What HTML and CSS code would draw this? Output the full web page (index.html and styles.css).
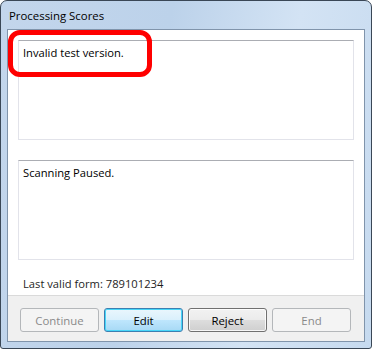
FILE: index.html
```html
<!DOCTYPE html>
<html>

<head>
    <meta name="viewport" content="width=device-width, initial-scale=1">
    <title>Processing Scores</title>

    <link rel="stylesheet" href="styles.css">

</head>

<body>
    <div class="window">
        <div class="titlebar">Processing Scores</div>

        <div class="client">
            <div class="content">
                <div class="textbox">Invalid test version.</div>
                <div class="textbox second">Scanning Paused.</div>
                <div class="status">Last valid form: 789101234</div>
            </div>

            <div class="footer">
                <button class="btn" disabled>Continue</button>
                <button class="btn default">Edit</button>
                <button class="btn">Reject</button>
                <button class="btn" disabled>End</button>
            </div>
        </div>

        <!-- annotation round the first message -->
        <div class="highlight"></div>
    </div>
</body>

</html>
```

FILE: styles.css
```css
body {
    margin: 0;
    font-family: "Open Sans", "Noto Sans", sans-serif;
    font-size: 11.2px;
    color: #000;
}

.window {
    position: relative;
    width: 372px;
    height: 349px;
    box-sizing: border-box;
    border: 1px solid #3a4756;
    border-radius: 7px 7px 3px 3px;
    background: linear-gradient(100deg, #c3d6ec 0%, #bcd2ea 40%, #d3e3f4 70%, #c6daef 100%);
    padding: 0 6px 6px;
    display: flex;
    flex-direction: column;
}

.titlebar {
    height: 28px;
    line-height: 30px;
    padding-left: 2px;
    font-size: 11.4px;
    color: #000;
}

.client {
    flex: 1;
    border: 1px solid #8094ab;
    background-color: #fff;
    display: flex;
    flex-direction: column;
}

.content {
    flex: 1;
    padding: 10px 10px 0;
}

.textbox {
    height: 100px;
    box-sizing: border-box;
    border: 1px solid #e2e3ea;
    border-top-color: #abadb3;
    padding: 2px 4px;
    line-height: 20px;
    background-color: #fff;
}

.textbox.second {
    margin-top: 20px;
}

.status {
    padding: 16px 0 0 5px;
    line-height: 16px;
    color: #1e1e1e;
}

.footer {
    height: 46px;
    box-sizing: border-box;
    border-top: 1px solid #dadada;
    background-color: #f0f0f0;
    padding: 12px 0 0 12px;
    display: flex;
    gap: 5px;
}

.btn {
    width: 79px;
    height: 24px;
    margin: 0;
    padding: 0;
    font-family: inherit;
    font-size: 11.4px;
    color: #000;
    border: 1px solid #707070;
    border-radius: 3px;
    background: linear-gradient(#f2f2f2 0%, #ebebeb 50%, #dddddd 51%, #cfcfcf 100%);
    box-shadow: inset 0 0 0 1px rgba(255, 255, 255, 0.8);
}

.btn.default {
    border-color: #3c7fb1;
    background: linear-gradient(#eaf6fd 0%, #d9f0fc 50%, #bee6fd 51%, #a7d9f5 100%);
    box-shadow: inset 0 0 0 1px #48d6f8;
}

.btn:disabled {
    color: #8a8a8a;
    border-color: #b4b7ba;
    background: #f4f4f4;
    box-shadow: none;
}

.highlight {
    position: absolute;
    left: 7px;
    top: 29px;
    width: 144px;
    height: 47px;
    box-sizing: border-box;
    border: 5px solid #f00;
    border-radius: 12px;
}
```
